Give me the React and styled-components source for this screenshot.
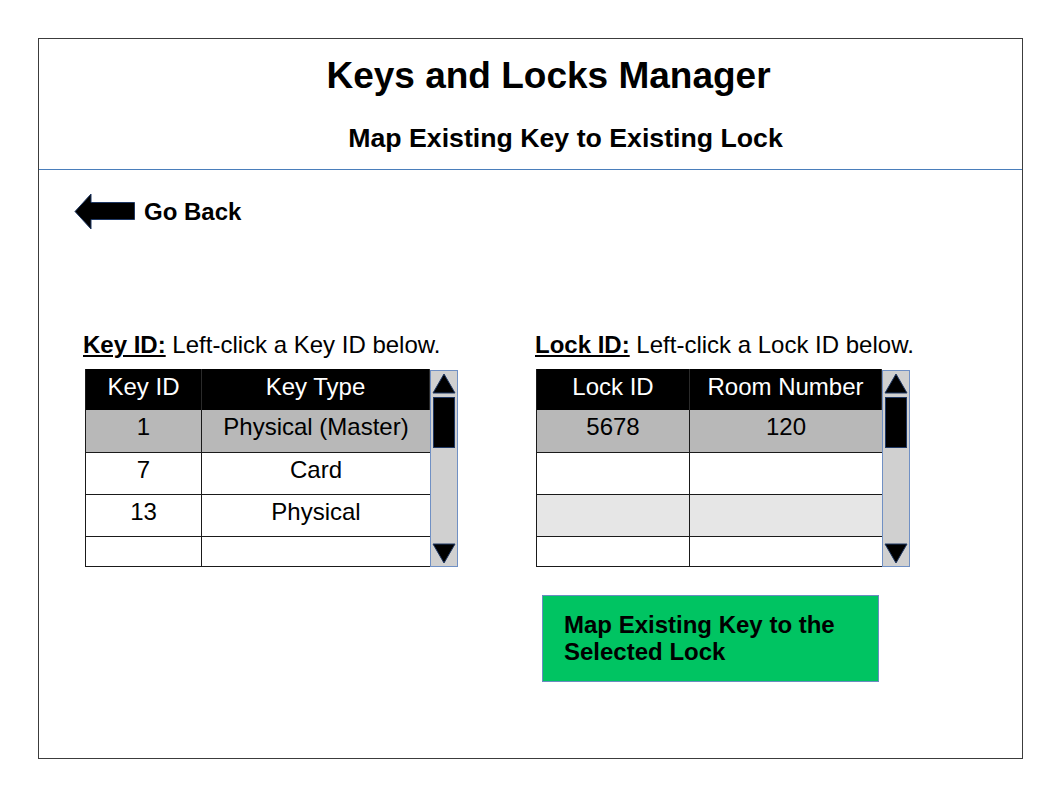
import React from 'react'
import styled, { createGlobalStyle } from 'styled-components'

const GlobalStyle = createGlobalStyle`
  body {
    margin: 0;
    background: #ffffff;
    font-family: "Liberation Sans", Arial, sans-serif;
    color: #000;
  }
`

const Page = styled.div`
  padding: 38px 0 0 38px;
`

const Frame = styled.div`
  width: 983px;
  height: 719px;
  border: 1px solid #3c3c3c;
  display: flex;
  flex-direction: column;
`

const Header = styled.header`
  height: 131px;
  border-bottom: 1px solid #4a7ebb;
  box-sizing: border-box;
  padding-top: 17px;
`

const Title = styled.h1`
  margin: 0;
  padding-left: ${p => p.$shift}px;
  text-align: center;
  font-size: ${p => p.$size}px;
  line-height: ${p => p.$line}px;
  font-weight: bold;
  margin-bottom: ${p => p.$after || 0}px;
`

const Body = styled.main`
  padding: 23px 0 0 35px;
`

const BackRow = styled.div`
  display: flex;
  align-items: center;
  gap: 8px;
  cursor: pointer;
`

const BackText = styled.span`
  font-size: 24px;
  font-weight: bold;
  line-height: 26px;
`

const Columns = styled.div`
  display: grid;
  grid-template-columns: 452px auto;
  margin: 100px 0 0 9px;
`

const Column = styled.section`
  display: flex;
  flex-direction: column;
`

const Label = styled.div`
  font-size: 24px;
  line-height: 28px;
  margin-bottom: 10px;
  white-space: nowrap;
`

const LabelKey = styled.span`
  font-weight: bold;
  text-decoration: underline;
`

const TableWrap = styled.div`
  display: flex;
  margin-left: ${p => p.$indent}px;
`

const Table = styled.div`
  display: grid;
  grid-template-columns: ${p => p.$cols};
  border-left: 1px solid #1a1a1a;
  border-bottom: 1px solid #1a1a1a;
`

const HeadCell = styled.div`
  background: #000;
  color: #fff;
  height: 41px;
  box-sizing: border-box;
  padding-top: 4px;
  text-align: center;
  font-size: 24px;
  line-height: 28px;
  border-right: 1px solid #2a2a2a;
  &:last-child {
    border-right: none;
  }
`

const Cell = styled.div`
  background: ${p => p.$bg};
  height: ${p => p.$h}px;
  box-sizing: border-box;
  padding-top: 3px;
  text-align: center;
  font-size: 24px;
  line-height: 28px;
  border-right: ${p => (p.$last ? 'none' : '1px solid #1a1a1a')};
  border-top: ${p => (p.$first ? 'none' : '1px solid #1a1a1a')};
`

const Scrollbar = styled.div`
  width: 26px;
  margin-top: 1px;
  background: #d0d0d0;
  border: 1px solid #7090c4;
  display: flex;
  flex-direction: column;
  align-items: center;
  padding: 2px 0 2px;
`

const Thumb = styled.div`
  width: 20px;
  height: 49px;
  margin-top: 3px;
  background: #000;
  border: 1px solid #1f3864;
`

const Spacer = styled.div`
  flex: 1;
`

const ActionButton = styled.button`
  margin: 28px 0 0 7px;
  width: 337px;
  height: 87px;
  box-sizing: border-box;
  background: #00c462;
  border: 1px solid #6a8cc0;
  text-align: left;
  padding: 15px 0 0 21px;
  font-family: "Liberation Sans", Arial, sans-serif;
  font-size: 24px;
  line-height: 27px;
  font-weight: bold;
  color: #000;
  display: flex;
  flex-direction: column;
  align-items: flex-start;
  justify-content: flex-start;
  cursor: pointer;
`

function BackArrow() {
  return (
    <svg width="62" height="38" viewBox="0 0 62 38">
      <polygon
        points="1,18.5 17,1 17,9.5 60.5,9.5 60.5,26.5 17,26.5 17,36"
        fill="#000"
        stroke="#1f3864"
        strokeWidth="1"
      />
    </svg>
  )
}

function Triangle({ down }) {
  return (
    <svg width="24" height="21" viewBox="0 0 24 21">
      <polygon
        points={down ? '1,1 23,1 12,20' : '12,1 23,20 1,20'}
        fill="#000"
        stroke="#1f3864"
        strokeWidth="1"
      />
    </svg>
  )
}

function ScrollBox() {
  return (
    <Scrollbar>
      <Triangle />
      <Thumb />
      <Spacer />
      <Triangle down />
    </Scrollbar>
  )
}

const rowHeights = [42, 42, 42, 30]

function DataTable({ cols, headers, rows, fills }) {
  return (
    <Table $cols={cols}>
      {headers.map(h => (
        <HeadCell key={h}>{h}</HeadCell>
      ))}
      {rows.map((row, i) =>
        row.map((value, j) => (
          <Cell
            key={i + '-' + j}
            $bg={fills[i]}
            $h={rowHeights[i]}
            $first={i === 0}
            $last={j === row.length - 1}
          >
            {value}
          </Cell>
        ))
      )}
    </Table>
  )
}

export default function App() {
  const keys = [
    ['1', 'Physical (Master)'],
    ['7', 'Card'],
    ['13', 'Physical'],
    ['', '']
  ]
  const locks = [
    ['5678', '120'],
    ['', ''],
    ['', ''],
    ['', '']
  ]

  return (
    <>
      <GlobalStyle />
      <Page>
        <Frame>
          <Header>
            <Title $size={37} $line={40} $shift={36} $after={27}>
              Keys and Locks Manager
            </Title>
            <Title as="h2" $size={26.7} $line={30} $shift={70}>
              Map Existing Key to Existing Lock
            </Title>
          </Header>
          <Body>
            <BackRow>
              <BackArrow />
              <BackText>Go Back</BackText>
            </BackRow>
            <Columns>
              <Column>
                <Label>
                  <LabelKey>Key ID:</LabelKey> Left-click a Key ID below.
                </Label>
                <TableWrap $indent={2}>
                  <DataTable
                    cols="116px 228px"
                    headers={['Key ID', 'Key Type']}
                    rows={keys}
                    fills={['#b8b8b8', '#fff', '#fff', '#fff']}
                  />
                  <ScrollBox />
                </TableWrap>
              </Column>
              <Column>
                <Label>
                  <LabelKey>Lock ID:</LabelKey> Left-click a Lock ID below.
                </Label>
                <TableWrap $indent={1}>
                  <DataTable
                    cols="153px 192px"
                    headers={['Lock ID', 'Room Number']}
                    rows={locks}
                    fills={['#b8b8b8', '#fff', '#e6e6e6', '#fff']}
                  />
                  <ScrollBox />
                </TableWrap>
                <ActionButton>
                  <span>Map Existing Key to the</span>
                  <span>Selected Lock</span>
                </ActionButton>
              </Column>
            </Columns>
          </Body>
        </Frame>
      </Page>
    </>
  )
}
